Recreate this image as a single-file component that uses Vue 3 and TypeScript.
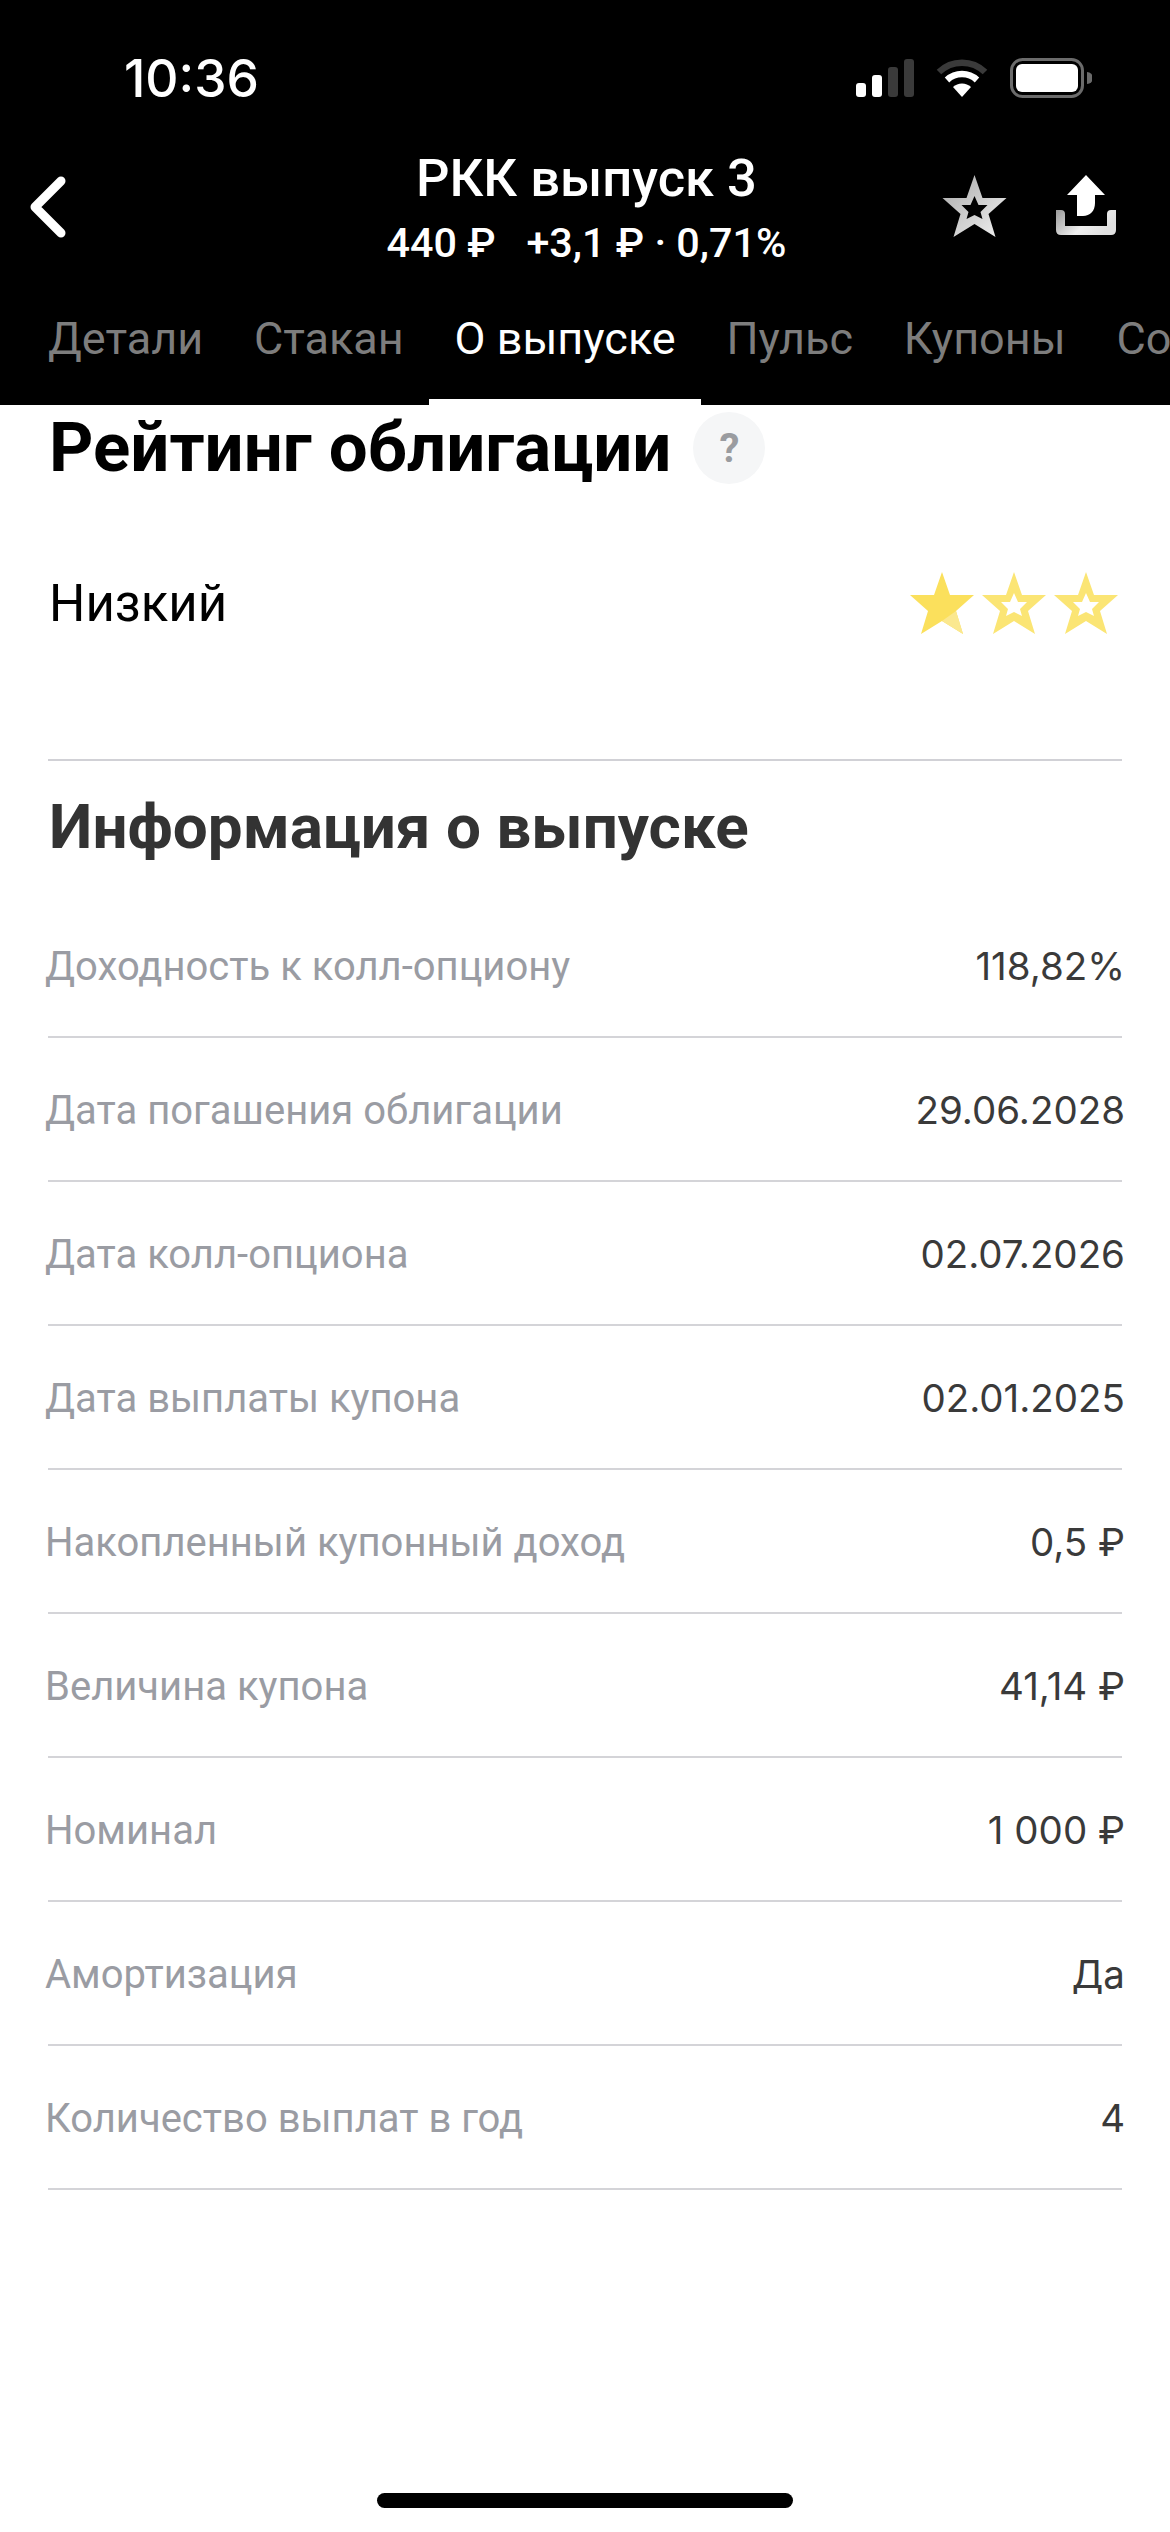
<script setup lang="ts">
const tabs: { label: string; active?: boolean }[] = [
  { label: 'Детали' },
  { label: 'Стакан' },
  { label: 'О выпуске', active: true },
  { label: 'Пульс' },
  { label: 'Купоны' },
  { label: 'События' },
]
const rows: [string, string][] = [
  ['Доходность к колл-опциону', '118,82%'],
  ['Дата погашения облигации', '29.06.2028'],
  ['Дата колл-опциона', '02.07.2026'],
  ['Дата выплаты купона', '02.01.2025'],
  ['Накопленный купонный доход', '0,5 ₽'],
  ['Величина купона', '41,14 ₽'],
  ['Номинал', '1 000 ₽'],
  ['Амортизация', 'Да'],
  ['Количество выплат в год', '4'],
]
const starPath = 'M32 0 L40 23 L64 23 L46 39 L53 62 L32 49 L11 62 L18 39 L0 23 L24 23 Z'
const innerPath = 'M32 21 L36 30 L45 30 L38 37 L40 44 L32 40 L24 44 L26 37 L19 30 L28 30 Z'
</script>

<template>
  <div class="page">
    <header class="head">
      <div class="status">
        <span class="time">10:36</span>
        <div class="status-icons">
          <svg width="58" height="38" viewBox="0 0 58 38">
            <rect x="0" y="24" width="10" height="14" rx="3" fill="#fff" />
            <rect x="16" y="16" width="10" height="22" rx="3" fill="#fff" />
            <rect x="32" y="8" width="10" height="30" rx="3" fill="#3a3a3a" />
            <rect x="48" y="0" width="10" height="38" rx="3" fill="#3a3a3a" />
          </svg>
          <svg width="52" height="38" viewBox="0 0 52 38">
            <path d="M3 13 A33 33 0 0 1 49 13" fill="none" stroke="#3a3a3a" stroke-width="6.5" />
            <path d="M11 21 A22 22 0 0 1 41 21" fill="none" stroke="#fff" stroke-width="6.5" />
            <path d="M17 28 A13 13 0 0 1 35 28 L26 38 Z" fill="#fff" />
          </svg>
          <svg width="82" height="40" viewBox="0 0 82 40">
            <rect x="1.5" y="1.5" width="71" height="37" rx="11" fill="none" stroke="#6b6b6b" stroke-width="3" />
            <rect x="6" y="6" width="62" height="28" rx="6" fill="#fff" />
            <path d="M77 14 A6 6 0 0 1 77 26 Z" fill="#6b6b6b" />
          </svg>
        </div>
      </div>
      <div class="nav">
        <svg class="back" width="36" height="62" viewBox="0 0 36 62">
          <path d="M31 5 L5 31 L31 57" fill="none" stroke="#fff" stroke-width="9" stroke-linecap="round" stroke-linejoin="round" />
        </svg>
        <div class="titles">
          <div class="title">РКК выпуск 3</div>
          <div class="sub">440 ₽&nbsp;&nbsp; +3,1 ₽ · 0,71%</div>
        </div>
        <div class="actions">
          <svg width="65" height="62" viewBox="0 0 64 62">
            <defs>
              <linearGradient id="metal" x1="0" y1="0" x2="1" y2="1">
                <stop offset="0" stop-color="#a8a8a8" />
                <stop offset="1" stop-color="#f2f2f2" />
              </linearGradient>
            </defs>
            <path :d="starPath" fill="url(#metal)" />
            <path :d="innerPath" fill="#000" />
          </svg>
          <svg width="60" height="60" viewBox="0 0 60 60">
            <defs>
              <linearGradient id="metal2" x1="0" y1="0" x2="1" y2="0.4">
                <stop offset="0" stop-color="#9a9a9a" />
                <stop offset="0.6" stop-color="#f0f0f0" />
                <stop offset="1" stop-color="#e0e0e0" />
              </linearGradient>
            </defs>
            <path d="M30 0 L49 20 L39 20 L39 28 C39 36 34 41 27 41 L21 41 L21 20 L11 20 Z" fill="#fff" />
            <path d="M0 35 H5 Q9 35 9 39 V51 H51 V39 Q51 35 55 35 H60 V55 Q60 60 55 60 H5 Q0 60 0 55 Z" fill="url(#metal2)" />
          </svg>
        </div>
      </div>
      <nav class="tabs">
        <div v-for="t in tabs" :key="t.label" class="tab" :class="{ active: t.active }">{{ t.label }}</div>
      </nav>
    </header>

    <main class="content">
      <section class="rating">
        <div class="h-row">
          <h2 class="h1">Рейтинг облигации</h2>
          <span class="help">?</span>
        </div>
        <div class="rate-row">
          <span class="rate-label">Низкий</span>
          <div class="stars">
            <svg v-for="i in 3" :key="i" width="64" height="62" viewBox="0 0 64 62">
              <path :d="starPath" :fill="i === 1 ? '#fbe05c' : '#fbe574'" />
              <path v-if="i === 1" d="M32 49 L46 39 L53 62 Z" fill="#fbe88f" />
              <path v-if="i > 1" :d="innerPath" fill="#fff" />
            </svg>
          </div>
        </div>
      </section>
      <section class="info">
        <h2 class="h2">Информация о выпуске</h2>
        <div v-for="r in rows" :key="r[0]" class="row">
          <span class="lbl">{{ r[0] }}</span>
          <span class="val">{{ r[1] }}</span>
        </div>
      </section>
    </main>
    <div class="home-wrap"><div class="home"></div></div>
  </div>
</template>

<style>
html, body { margin: 0; background: #fff; }
</style>

<style scoped>
.page {
  width: 1170px;
  height: 2532px;
  overflow: hidden;
  position: relative;
  background: #fff;
  font-family: Roboto, "Liberation Sans", sans-serif;
}
.head {
  background: #000;
  height: 405px;
  color: #fff;
  overflow: hidden;
}
.status {
  display: flex;
  justify-content: space-between;
  align-items: center;
  padding: 58px 78px 0 124px;
  height: 39px;
}
.time { font-family: Inter, Roboto, sans-serif; font-size: 51.5px; font-weight: 500; }
.status-icons { display: flex; align-items: center; gap: 22px; }
.nav {
  display: flex;
  align-items: flex-start;
  margin-top: 57px;
  padding-left: 30px;
  height: 120px;
  position: relative;
}
.back { margin-top: 22px; }
.titles {
  position: absolute;
  left: 3px;
  right: 0;
  top: -11px;
  text-align: center;
}
.title { font-size: 52.5px; font-weight: 500; line-height: 70px; }
.sub { font-size: 41.3px; font-weight: 500; line-height: 48px; margin-top: 6px; }
.actions {
  position: absolute;
  left: 942px;
  top: 21px;
  display: flex;
  gap: 49px;
}
.tabs {
  display: flex;
  padding-left: 22.6px;
  margin-top: 29px;
  height: 102px;
  white-space: nowrap;
}
.tab {
  font-size: 45px;
  line-height: 72px;
  padding: 0 25.4px;
  color: #7d7d7d;
  height: 102px;
  box-sizing: border-box;
  flex: none;
}
.tab.active { color: #fff; border-bottom: 6px solid #fff; }
.content { padding: 0 48px; }
.rating { border-bottom: 2px solid #d1d1d6; height: 356px; box-sizing: border-box; }
.h-row { display: flex; align-items: center; gap: 22px; height: 86px; padding-left: 1px; }
.h1 { margin: 0; font-size: 69px; font-weight: 700; color: #000; line-height: 86px; }
.help {
  width: 72px; height: 72px; border-radius: 50%;
  background: #f5f6f7; color: #9a9ca0;
  display: flex; align-items: center; justify-content: center;
  font-size: 40px; font-weight: 700;
}
.rate-row {
  display: flex; justify-content: space-between; align-items: center;
  margin-top: 81px; padding-left: 1px; height: 62px; padding-right: 4px;
}
.rate-label { font-size: 51px; color: #000; }
.stars { display: flex; gap: 8px; }
.h2 { margin: 0 0 24px; font-size: 62px; font-weight: 700; color: #333; line-height: 86px; padding: 23px 0 0 1px; }
.row {
  height: 144px;
  box-sizing: border-box;
  display: flex;
  justify-content: space-between;
  align-items: center;
  border-bottom: 2px solid #d4d4d8;
  padding-top: 2px;
}
.lbl { font-size: 40px; color: #9a9ca3; margin-left: -3px; }
.val { font-family: Inter, Roboto, sans-serif; font-size: 38.5px; color: #3a3a3a; margin-right: -3px; }
.home-wrap { position: absolute; left: 0; right: 0; bottom: 24px; display: flex; justify-content: center; }
.home { width: 416px; height: 15px; border-radius: 8px; background: #000; }
</style>
